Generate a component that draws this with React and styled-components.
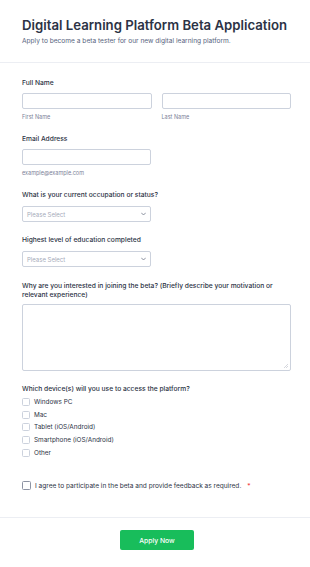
import React from 'react';
import styled, { createGlobalStyle } from 'styled-components';

const GlobalStyle = createGlobalStyle`
  html, body {
    margin: 0;
    padding: 0;
    background: #ffffff;
  }
  body {
    font-family: Inter, "Noto Sans", sans-serif;
    color: #2c3345;
  }
  * { box-sizing: border-box; }
`;

const Page = styled.div`
  width: 310px;
  min-height: 567px;
  background: #ffffff;
`;

const Header = styled.div`
  padding: 17px 19px 16px 22px;
  border-bottom: 1px solid #eceef3;
  > h1 {
    margin: 0;
    font-size: 13.2px;
    line-height: 16px;
    font-weight: 600;
    color: #2c3345;
    white-space: nowrap;
  }
  > p {
    margin: 3px 0 0 0;
    font-size: 6.6px;
    line-height: 10px;
    color: #57647e;
  }
`;

const Body = styled.div`
  padding: 16px 19px 27px 22px;
  border-bottom: 1px solid #eceef3;
`;

const Field = styled.div`
  margin-bottom: ${(p) => p.gap ?? 14}px;
`;

const Label = styled.div`
  font-size: 6.7px;
  line-height: 9px;
  font-weight: 500;
  color: #2c3345;
  margin-bottom: ${(p) => p.mb ?? 5}px;
`;

const Row = styled.div`
  display: flex;
  gap: 10px;
`;

const Col = styled.div`
  flex: 1;
`;

const Input = styled.div`
  height: 16px;
  width: ${(p) => p.w || '100%'};
  border: 1px solid #ccd2dd;
  border-radius: 2px;
  background: #fff;
`;

const SubLabel = styled.div`
  margin-top: 5px;
  font-size: 5.5px;
  line-height: 7px;
  color: #7b8298;
`;

const Select = styled.div`
  height: 16px;
  width: 129px;
  border: 1px solid #ccd2dd;
  border-radius: 2px;
  display: flex;
  align-items: center;
  justify-content: space-between;
  padding: 0 4px 0 4px;
  font-size: 6px;
  color: #a5abba;
`;

const TextArea = styled.div`
  position: relative;
  height: 67px;
  border: 1px solid #ccd2dd;
  border-radius: 2px;
`;

const Grip = styled.svg`
  position: absolute;
  right: 2px;
  bottom: 2px;
`;

const Checks = styled.div`
  display: flex;
  flex-direction: column;
  gap: 4.7px;
  margin-top: 4px;
`;

const CheckRow = styled.div`
  display: flex;
  align-items: center;
  gap: 4px;
  height: 8px;
  font-size: 6.4px;
  line-height: 8px;
  color: #2c3345;
`;

const Box = styled.span`
  width: ${(p) => p.size || 8}px;
  height: ${(p) => p.size || 8}px;
  border: 1px solid ${(p) => (p.dark ? '#8d93a3' : '#ccd2dd')};
  border-radius: 1.5px;
  flex: none;
  background: #fff;
`;

const Agree = styled(CheckRow)`
  margin-top: 24.5px;
  height: 9px;
  gap: 4px;
  font-size: 6.55px;
  > em {
    font-style: normal;
    color: #f23a3c;
    margin-left: 2px;
  }
`;

const Footer = styled.div`
  display: flex;
  justify-content: center;
  padding: 12px 0 16px 4px;
`;

const Button = styled.button`
  width: 74px;
  height: 20px;
  border: none;
  border-radius: 2px;
  background: #18bd5b;
  color: #fff;
  font-family: Inter, sans-serif;
  font-size: 6.8px;
  font-weight: 500;
`;

const Chevron = () => (
  <svg width="5" height="4" viewBox="0 0 10 6">
    <path d="M1 1l4 4 4-4" fill="none" stroke="#6f7688" strokeWidth="1.6" strokeLinecap="round" />
  </svg>
);

const devices = ['Windows PC', 'Mac', 'Tablet (iOS/Android)', 'Smartphone (iOS/Android)', 'Other'];

export default function App() {
  return (
    <Page>
      <GlobalStyle />
      <Header>
        <h1>Digital Learning Platform Beta Application</h1>
        <p>Apply to become a beta tester for our new digital learning platform.</p>
      </Header>
      <Body>
        <Field>
          <Label>Full Name</Label>
          <Row>
            <Col>
              <Input />
              <SubLabel>First Name</SubLabel>
            </Col>
            <Col>
              <Input />
              <SubLabel>Last Name</SubLabel>
            </Col>
          </Row>
        </Field>
        <Field>
          <Label>Email Address</Label>
          <Input w="129px" />
          <SubLabel>example@example.com</SubLabel>
        </Field>
        <Field>
          <Label mb={6}>What is your current occupation or status?</Label>
          <Select>Please Select<Chevron /></Select>
        </Field>
        <Field gap={15}>
          <Label mb={6}>Highest level of education completed</Label>
          <Select>Please Select<Chevron /></Select>
        </Field>
        <Field>
          <Label mb={4}>Why are you interested in joining the beta? (Briefly describe your motivation or relevant experience)</Label>
          <TextArea>
            <Grip width="4" height="4" viewBox="0 0 4 4">
              <path d="M4 0L0 4M4 2L2 4" stroke="#b8bcc6" strokeWidth="0.6" />
            </Grip>
          </TextArea>
        </Field>
        <Field gap={0}>
          <Label mb={0}>Which device(s) will you use to access the platform?</Label>
          <Checks>
            {devices.map((d) => (
              <CheckRow key={d}>
                <Box />
                {d}
              </CheckRow>
            ))}
          </Checks>
          <Agree>
            <Box size={9} dark />
            I agree to participate in the beta and provide feedback as required.<em>*</em>
          </Agree>
        </Field>
      </Body>
      <Footer>
        <Button>Apply Now</Button>
      </Footer>
    </Page>
  );
}
